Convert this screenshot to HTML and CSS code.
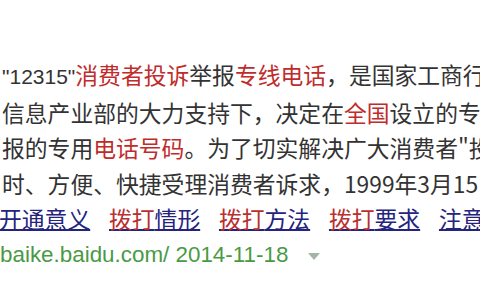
FILE: index.html
```html
<!DOCTYPE html>
<html lang="zh-CN">
<head>
<meta charset="utf-8">
<title>12315</title>
<link rel="stylesheet" href="styles.css">
</head>
<body>
<div class="result">
  <div class="abstract">
    <div class="line"><span class="num">"12315"</span><em>消费者投诉</em>举报<em>专线电话</em>，是国家工商行政管理总局</div>
    <div class="line">信息产业部的大力支持下，决定在<em>全国</em>设立的专用</div>
    <div class="line">报的专用<em>电话号码</em>。为了切实解决广大消费者"投诉</div>
    <div class="line">时、方便、快捷受理消费者诉求，1999年3月15日</div>
  </div>
  <div class="links">
    <a class="link" href="#">开通意义</a>
    <a class="link" href="#"><em>拨打</em>情形</a>
    <a class="link" href="#"><em>拨打</em>方法</a>
    <a class="link" href="#"><em>拨打</em>要求</a>
    <a class="link" href="#">注意事项</a>
  </div>
  <div class="url">baike.baidu.com/ 2014-11-18<span class="caret"></span></div>
</div>
</body>
</html>
```
FILE: styles.css
```css
html, body {
  margin: 0;
  padding: 0;
  background: #ffffff;
}

.result {
  width: 480px;
  height: 300px;
  overflow: hidden;
  padding-top: 57px;
  box-sizing: border-box;
  font-family: "Noto Sans CJK SC", "Liberation Sans", sans-serif;
  font-size: 22.8px;
  line-height: 35.5px;
  color: #333333;
  white-space: nowrap;
}

.abstract {
  padding-left: 2px;
}

.line {
  overflow: hidden;
}

.num {
  font-family: "Liberation Sans", Arial, sans-serif;
  font-size: 21px;
}

em {
  font-style: normal;
  color: #c02c2c;
}

.links {
  display: flex;
  gap: 18.8px;
  margin-left: -1px;
}

.link {
  flex: none;
  color: #24237e;
  text-decoration: underline;
  text-underline-offset: 1px;
}

.link em {
  color: #b8302f;
}

.url {
  font-family: "Liberation Sans", Arial, sans-serif;
  font-size: 22.4px;
  color: #4a9a45;
  display: flex;
  align-items: center;
}

.caret {
  display: inline-block;
  width: 0;
  height: 0;
  margin-left: 20px;
  margin-top: 4px;
  border-left: 6px solid transparent;
  border-right: 6px solid transparent;
  border-top: 7px solid #a3b5a3;
}
```
